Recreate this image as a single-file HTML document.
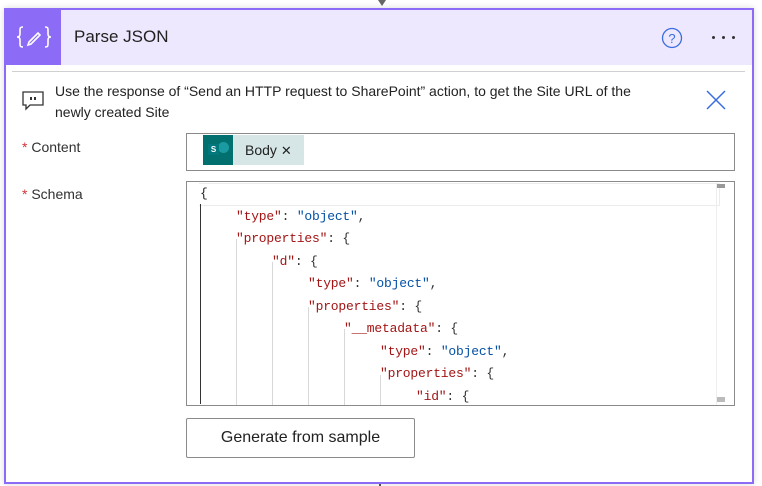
<!DOCTYPE html>
<html><head><style>
body{margin:0;width:762px;height:486px;background:#fff;position:relative;overflow:hidden;font-family:"Segoe UI","Liberation Sans",sans-serif;color:#323130}
.abs{position:absolute}
.card{left:4px;top:8px;width:746px;height:472px;border:2px solid #8c6cf6;background:#fff;box-shadow:0 0 6px rgba(0,0,0,.15)}
.code{font-family:"Liberation Mono",monospace;font-size:13px;line-height:22.5px;white-space:pre;letter-spacing:-0.2px}
.code i{display:inline-block;font-style:normal}
.k{color:#a31515}.s{color:#0451a5}.p{color:#222}
.g{position:absolute;width:1px;background:#d8d8d8}
</style></head><body>
<div class="abs" style="left:378px;top:0;width:8px;height:6px;background:#666;clip-path:polygon(0 0,100% 0,50% 100%)"></div>
<div class="abs" style="left:379px;top:480px;width:2px;height:6px;background:#555"></div>
<div class="abs card"></div>
<div class="abs" style="left:6px;top:10px;width:746px;height:55px;background:#ede8fd"></div>
<div class="abs" style="left:6px;top:10px;width:55px;height:55px;background:#8c6cf6"></div>
<svg class="abs" style="left:16px;top:22px" width="36" height="30" viewBox="0 0 36 30"><g fill="none" stroke="#fff" stroke-width="1.6"><path d="M7 5c-3 0-3 1-3 4v3c0 2-1 3-3 3c2 0 3 1 3 3v3c0 3 0 4 3 4"/><path d="M29 5c3 0 3 1 3 4v3c0 2 1 3 3 3c-2 0-3 1-3 3v3c0 3 0 4-3 4"/><path d="M13 20l9-9 2 2-9 9-3 1z"/></g></svg>
<div class="abs" style="left:74px;top:27px;font-size:17px;color:#222">Parse JSON</div>
<svg class="abs" style="left:661px;top:27px" width="22" height="22"><circle cx="11" cy="11" r="9.5" fill="none" stroke="#3a6de0" stroke-width="1.3"/><text x="11" y="16" text-anchor="middle" font-size="13" fill="#3a6de0" font-family="Liberation Sans">?</text></svg>
<div class="abs" style="left:712px;top:36px;width:3px;height:3px;border-radius:2px;background:#333;box-shadow:10px 0 #333,20px 0 #333"></div>
<div class="abs" style="left:12px;top:71px;width:733px;height:1px;background:#d0d0d0"></div>
<svg class="abs" style="left:22px;top:91px" width="22" height="20"><path d="M1 1h20v13H8l-4 4v-4H1z" fill="none" stroke="#333" stroke-width="1.3"/><rect x="8" y="6" width="2" height="3" fill="#333"/><rect x="12" y="6" width="2" height="3" fill="#333"/></svg>
<div class="abs" style="left:55px;top:81px;font-size:14px;line-height:20.5px;color:#222;width:615px">Use the response of “Send an HTTP request to SharePoint” action, to get the Site URL of the newly created Site</div>
<svg class="abs" style="left:705px;top:89px" width="22" height="22"><path d="M2 2l18 18M20 2L2 20" stroke="#3a6de0" stroke-width="1.5"/></svg>
<div class="abs" style="left:22px;top:139px;font-size:14px"><span style="color:#d13438">*</span> Content</div>
<div class="abs" style="left:186px;top:133px;width:547px;height:36px;border:1px solid #8a8a8a"></div>
<div class="abs" style="left:203px;top:135px;width:101px;height:30px;background:#d6e6e6"></div>
<div class="abs" style="left:203px;top:135px;width:30px;height:30px;background:#037070"></div>
<div class="abs" style="left:218px;top:142px;width:11px;height:11px;border-radius:6px;background:#1a9ba1"></div>
<div class="abs" style="left:208px;top:144px;width:11px;height:11px;background:#03787c;color:#fff;font-size:8px;line-height:11px;text-align:center;font-weight:bold">S</div>
<div class="abs" style="left:245px;top:142px;font-size:14px;color:#222">Body <span style="font-size:13px">✕</span></div>
<div class="abs" style="left:22px;top:186px;font-size:14px"><span style="color:#d13438">*</span> Schema</div>
<div class="abs" style="left:186px;top:181px;width:547px;height:223px;border:1px solid #8a8a8a;overflow:hidden">
<div class="abs" style="left:12px;top:1px;width:520px;height:21px;border:1px solid #ececec;border-left:none"></div>
<div class="abs" style="left:529px;top:0;width:16px;height:223px;border-left:1px solid #eee"></div>
<div class="abs" style="left:530px;top:2px;width:8px;height:4px;background:#999"></div>
<div class="abs" style="left:530px;top:215px;width:8px;height:5px;background:#bbb"></div>
<div class="g" style="left:13px;top:22px;height:200px;background:#333"></div>
<div class="g" style="left:49px;top:57px;height:170px"></div>
<div class="g" style="left:85px;top:80px;height:150px"></div>
<div class="g" style="left:121px;top:125px;height:100px"></div>
<div class="g" style="left:157px;top:147px;height:80px"></div>
<div class="g" style="left:193px;top:193px;height:40px"></div>
<div class="abs code" style="left:13px;top:1px"><span class="p">{</span>
<i style="width:36px"></i><span class="k">"type"</span>: <span class="s">"object"</span>,
<i style="width:36px"></i><span class="k">"properties"</span>: {
<i style="width:72px"></i><span class="k">"d"</span>: {
<i style="width:108px"></i><span class="k">"type"</span>: <span class="s">"object"</span>,
<i style="width:108px"></i><span class="k">"properties"</span>: {
<i style="width:144px"></i><span class="k">"__metadata"</span>: {
<i style="width:180px"></i><span class="k">"type"</span>: <span class="s">"object"</span>,
<i style="width:180px"></i><span class="k">"properties"</span>: {
<i style="width:216px"></i><span class="k">"id"</span>: {</div>
</div>
<div class="abs" style="left:186px;top:418px;width:227px;height:38px;border:1px solid #8a8a8a;border-radius:2px;font-size:16px;line-height:38px;text-align:center;color:#222">Generate from sample</div>
</body></html>
